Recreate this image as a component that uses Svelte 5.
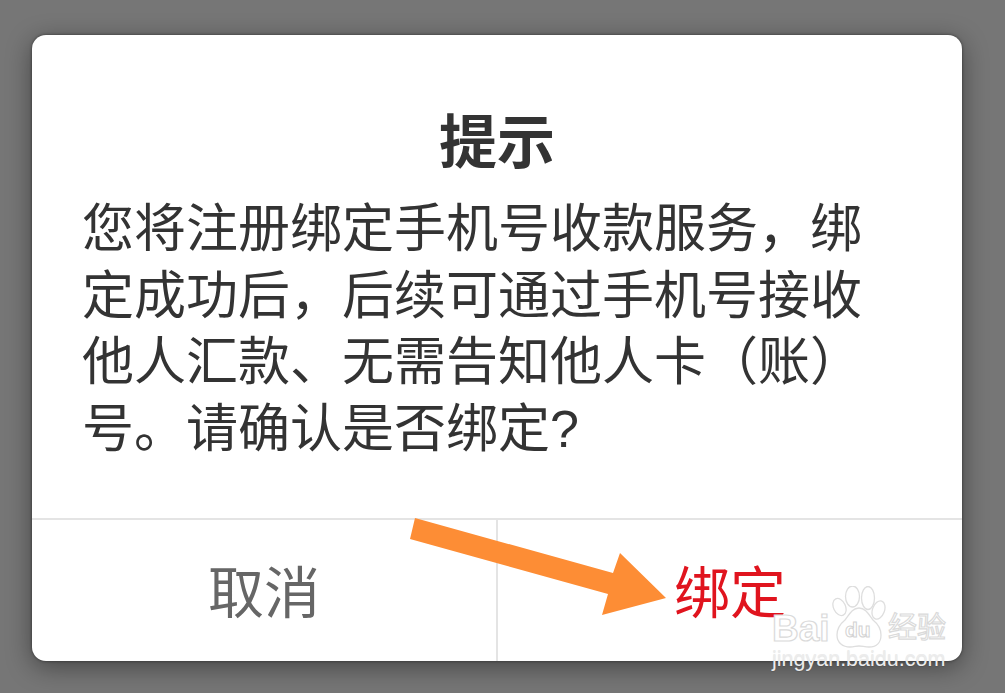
<script lang="ts">
	let title = '提示';
	let message = '您将注册绑定手机号收款服务，绑定成功后，后续可通过手机号接收他人汇款、无需告知他人卡（账）号。请确认是否绑定?';
</script>

<div class="page">
	<section class="dialog">
		<div class="content">
			<h1 class="title">{title}</h1>
			<p class="message">{message}</p>
		</div>
		<footer class="actions">
			<button class="btn cancel" type="button">取消</button>
			<button class="btn confirm" type="button">绑定</button>
		</footer>
	</section>

	<svg class="arrow" viewBox="0 0 1005 693" aria-hidden="true">
		<polygon points="415,518 613,573 620,553 666,598 602,615 608,594 410,539" fill="#fd8d35" />
	</svg>

	<div class="watermark">
		<div class="logo">
			<span class="wm-text bai">Bai</span>
			<span class="paw">
				<svg viewBox="0 0 54 62" width="54" height="62" aria-hidden="true">
					<g fill="#fff" stroke="#dedede" stroke-width="1.3">
						<ellipse cx="7.5" cy="21" rx="6" ry="9" transform="rotate(-25 7.5 21)" />
						<ellipse cx="20.5" cy="10.5" rx="7" ry="10.5" />
						<ellipse cx="36" cy="12" rx="6.5" ry="11.5" />
						<ellipse cx="46.5" cy="24" rx="6" ry="9.5" transform="rotate(20 46.5 24)" />
						<path d="M27 22c-7 0-10 7-14 12-5 4-8 9-8 15 0 8 6 12 13 12 4 0 6-1 9-1s6 1 10 1c7 0 12-4 12-12 0-6-3-11-8-15-4-5-7-12-14-12z" />
					</g>
				</svg>
				<span class="du">du</span>
			</span>
			<span class="wm-text jy">经验</span>
		</div>
		<div class="url">jingyan.baidu.com</div>
	</div>
</div>

<style>
	:global(body) {
		margin: 0;
		background: #767676;
	}

	.page {
		position: relative;
		width: 1005px;
		height: 693px;
		padding: 35px 43px 32px 32px;
		box-sizing: border-box;
		overflow: hidden;
		background: #767676;
		font-family: 'Liberation Sans', 'Noto Sans CJK SC', sans-serif;
	}

	.dialog {
		display: flex;
		flex-direction: column;
		height: 626px;
		background: #fff;
		border-radius: 14px;
		box-shadow: 0 0 3px rgba(0, 0, 0, 0.5), 0 6px 26px rgba(0, 0, 0, 0.42);
		overflow: hidden;
	}

	.content {
		flex: 1;
		padding: 75px 50px 0;
	}

	.title {
		margin: 0 0 20px;
		font-size: 58px;
		line-height: 66px;
		font-weight: 700;
		color: #333;
		text-align: center;
	}

	.message {
		margin: 0;
		font-size: 52px;
		line-height: 66.5px;
		color: #333;
	}

	.actions {
		display: grid;
		grid-template-columns: 466px 1fr;
		height: 141px;
		border-top: 2px solid #e4e4e4;
	}

	.btn {
		border: 0;
		background: none;
		padding: 0 0 4px;
		font-family: inherit;
		font-size: 56px;
	}

	.cancel {
		color: #666;
		border-right: 2px solid #e4e4e4;
	}

	.confirm {
		color: #e0141e;
	}

	.arrow {
		position: absolute;
		inset: 0;
		width: 1005px;
		height: 693px;
		pointer-events: none;
	}

	.watermark {
		position: absolute;
		left: 772px;
		top: 587px;
		width: 190px;
		pointer-events: none;
	}

	.logo {
		display: flex;
		align-items: flex-end;
		height: 61px;
	}

	.wm-text {
		color: #fff;
		-webkit-text-stroke: 1.2px #dadada;
		line-height: 34px;
	}

	.bai {
		width: 60px;
		flex: none;
		padding-bottom: 2px;
		font-size: 37px;
		font-weight: 700;
		font-family: 'Liberation Sans', sans-serif;
	}

	.jy {
		flex: none;
		margin-left: 2px;
		padding-bottom: 3px;
		font-size: 29px;
	}

	.paw {
		position: relative;
		display: block;
		flex: none;
		width: 54px;
		height: 62px;
	}

	.paw svg {
		display: block;
	}

	.du {
		position: absolute;
		left: 13px;
		top: 32px;
		font-size: 21px;
		line-height: 24px;
		font-weight: 700;
		color: #fff;
		-webkit-text-stroke: 1px #d2d2d2;
	}

	.url {
		margin-top: 0;
		font-size: 21.5px;
		line-height: 22px;
		color: #ececec;
		text-shadow: 0 1px 1px rgba(0, 0, 0, 0.1);
		white-space: nowrap;
	}
</style>
